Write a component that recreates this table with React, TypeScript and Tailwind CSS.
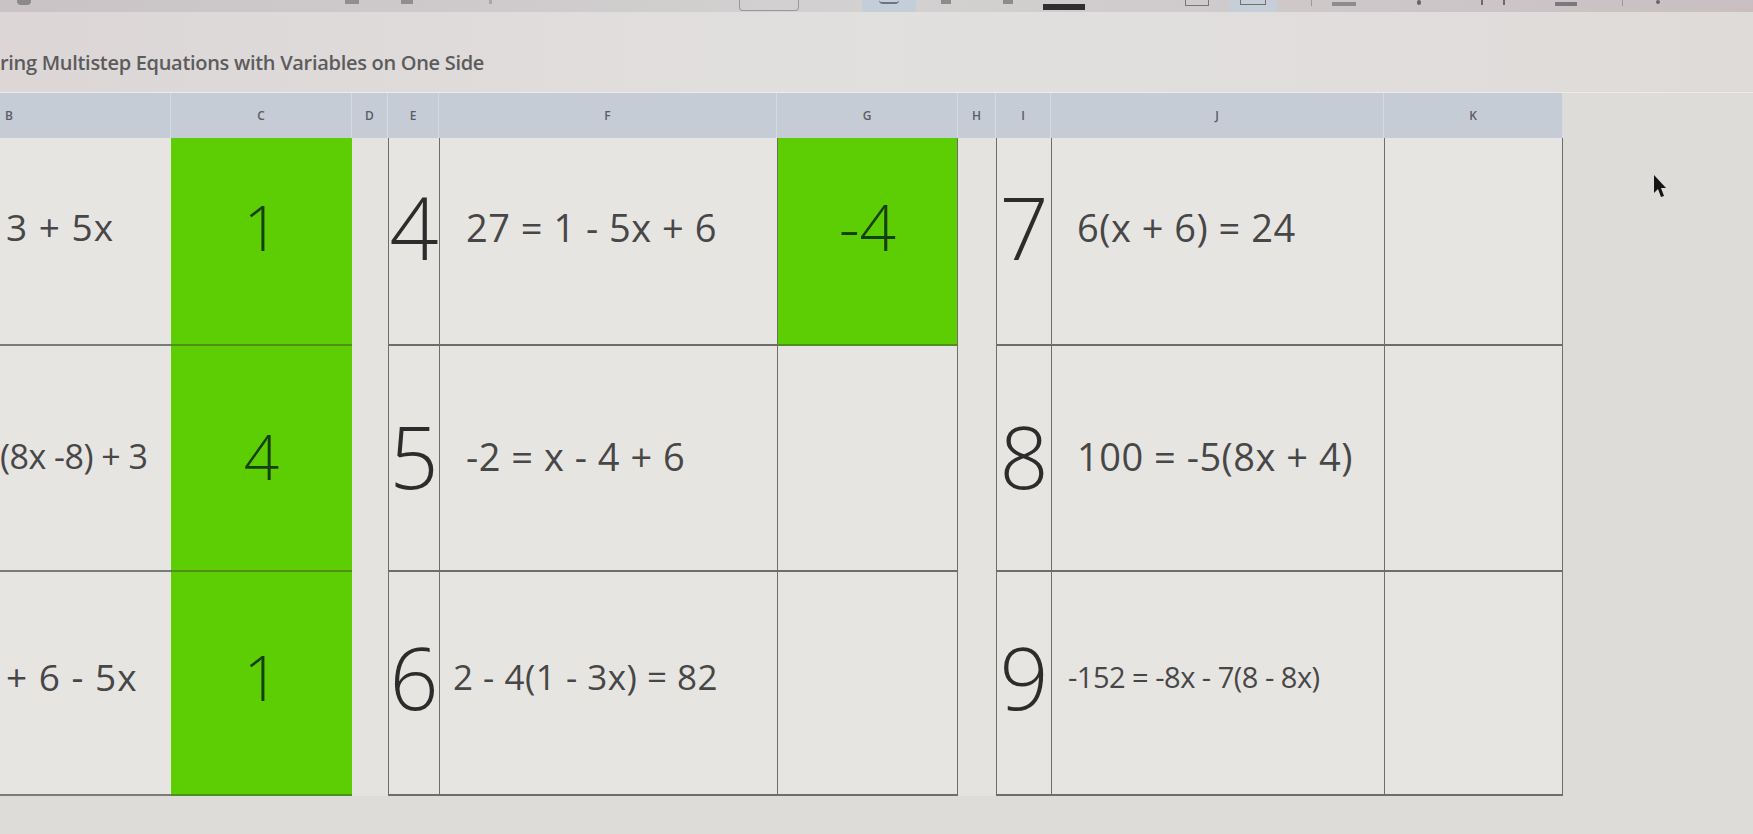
import { ReactNode } from 'react';

type Row = {
  b: string;
  c: string;
  e: string;
  f: string;
  g: string;
  i: string;
  j: string;
  greenG: boolean;
};

const ROWS: Row[] = [
  { b: '3 + 5x', c: '1', e: '4', f: '27 = 1 - 5x + 6', g: '-4', i: '7', j: '6(x + 6) = 24', greenG: true },
  { b: '(8x -8) + 3', c: '4', e: '5', f: '-2 = x - 4 + 6', g: '', i: '8', j: '100 = -5(8x + 4)', greenG: false },
  { b: '+ 6 - 5x', c: '1', e: '6', f: '2 - 4(1 - 3x) = 82', g: '', i: '9', j: '-152 = -8x - 7(8 - 8x)', greenG: false },
];

const HEADERS = ['B', 'C', 'D', 'E', 'F', 'G', 'H', 'I', 'J', 'K', ''];

const ROW_PAD = ['pb-7', 'pb-1', 'pb-3'];
const B_TEXT = [
  'pl-[6px] text-[37px] tracking-[1px]',
  'pl-0 text-[34px] tracking-[-0.5px]',
  'pl-[6px] text-[37px] tracking-[1px]',
];

function ToolbarStrip() {
  // only the bottom edge of the toolbar shows in the photo
  return (
    <div className="flex h-[12px] items-start bg-gradient-to-r from-[#c9c3c5] via-[#d3d1d1] to-[#c9bfc2]">
      <span className="ml-[17px] h-[5px] w-[14px] rounded-b-sm bg-[#8a8a8a]" />
      <span className="ml-[314px] h-[4px] w-[14px] bg-[#8f8f8f]" />
      <span className="ml-[42px] h-[4px] w-[12px] bg-[#8f8f8f]" />
      <span className="ml-[76px] h-[4px] w-[3px] bg-[#a8a8a8]" />
      <span className="ml-[247px] h-[11px] w-[60px] rounded-b-[4px] border border-t-0 border-[#9a9a9a]" />
      <span className="ml-[63px] flex h-[12px] w-[54px] items-start justify-center bg-[#c3ced9]">
        <span className="h-[4px] w-[20px] rounded-b-sm border-b-2 border-[#6d7380]" />
      </span>
      <span className="ml-[25px] h-[4px] w-[10px] bg-[#8c8c8c]" />
      <span className="ml-[52px] h-[4px] w-[10px] bg-[#8c8c8c]" />
      <span className="ml-[30px] mt-[4px] h-[6px] w-[42px] bg-[#2f2f2f]" />
      <span className="ml-[100px] h-[6px] w-[24px] border-b border-x border-[#777]" />
      <span className="ml-[20px] flex h-[12px] w-[48px] items-start justify-center bg-[#c6cfd9]">
        <span className="h-[5px] w-[26px] border-b border-x border-[#6f6f6f]" />
      </span>
      <span className="ml-[34px] h-[6px] w-px bg-[#999]" />
      <span className="ml-[20px] mt-[2px] h-[4px] w-[24px] bg-[#8c8c8c]" />
      <span className="ml-[61px] h-[5px] w-[4px] rounded-full bg-[#666]" />
      <span className="ml-[60px] h-[5px] w-[24px] border-x-2 border-[#6b6b6b]" />
      <span className="ml-[50px] mt-[2px] h-[4px] w-[22px] bg-[#7a7a7a]" />
      <span className="ml-[45px] h-[6px] w-px bg-[#999]" />
      <span className="ml-[33px] h-[4px] w-[4px] rounded-full bg-[#666]" />
    </div>
  );
}

function Cell({ className, children }: { className?: string; children?: ReactNode }) {
  return <div className={`flex overflow-hidden ${className ?? ''}`}>{children}</div>;
}

export default function App() {
  return (
    <div className="flex h-[834px] w-[1753px] flex-col overflow-hidden bg-[#dddcd8] font-['Open_Sans',sans-serif]">
      <ToolbarStrip />

      <div className="flex h-[80px] items-start bg-gradient-to-r from-[#dcd6d7] via-[#e2e0df] to-[#dedbd9] pt-[37px]">
        <h1 className="whitespace-nowrap text-[20px] font-semibold leading-[27px] tracking-[-0.3px] text-[#5c5c5c]">
          ring Multistep Equations with Variables on One Side
        </h1>
      </div>

      <div className="grid h-[46px] grid-cols-[171px_181px_36px_51px_338px_181px_38px_55px_333px_179px_1fr] border-t border-[#eceaea] bg-[#c5ccd6] text-[12px] font-semibold text-[#5a5d63]">
        {HEADERS.map((h, idx) => (
          <div
            key={idx}
            className={
              idx === 0
                ? 'flex items-center pl-[5px] border-r border-[#d4dae2]'
                : idx === 10
                  ? 'bg-[#dddcd8]'
                  : 'flex items-center justify-center border-r border-[#d4dae2]'
            }
          >
            {h}
          </div>
        ))}
      </div>

      <div className="grid grid-cols-[171px_181px_36px_51px_338px_181px_38px_55px_333px_179px_1fr] grid-rows-[208px_226px_224px] bg-[#e7e5e2] text-[#474747]">
        {ROWS.map((r, ri) => (
          <div key={ri} className="contents">
            <Cell className={`items-center whitespace-nowrap border-b-2 border-[#7d7b7a] ${ROW_PAD[ri]} ${B_TEXT[ri]}`}>
              {r.b}
            </Cell>
            <Cell className={`items-center justify-center border-b-2 border-[#4f8f1c] bg-[#5dcd04] text-[62px] font-light text-[#14400c] ${ROW_PAD[ri]}`}>
              {r.c}
            </Cell>
            <Cell className="bg-[#e4e3e0]" />
            <Cell className={`items-center justify-center border-b-2 border-l border-[#6e6d6c] text-[86px] font-light leading-none text-[#2c2c2c] ${ROW_PAD[ri]}`}>
              {r.e}
            </Cell>
            <Cell
              className={`items-center whitespace-nowrap border-b-2 border-l border-[#6e6d6c] ${ri === 2 ? 'pl-[13px] text-[35px]' : 'pl-[26px] text-[38px]'} ${ROW_PAD[ri]}`}
            >
              <span className="tracking-[0.5px]">{r.f}</span>
            </Cell>
            <Cell
              className={`items-center justify-center border-b-2 border-x border-[#6e6d6c] text-[64px] font-light text-[#14400c] ${r.greenG ? 'bg-[#5dcd04] border-b-[#4f8f1c]' : ''} ${ROW_PAD[ri]}`}
            >
              {r.g}
            </Cell>
            <Cell className="bg-[#e4e3e0]" />
            <Cell className={`items-center justify-center border-b-2 border-l border-[#6e6d6c] text-[86px] font-light leading-none text-[#2c2c2c] ${ROW_PAD[ri]}`}>
              {r.i}
            </Cell>
            <Cell
              className={`items-center whitespace-nowrap border-b-2 border-l border-[#6e6d6c] ${ri === 2 ? 'pl-[16px] text-[29px] tracking-[-0.5px]' : 'pl-[25px] text-[38px] tracking-[0.5px]'} ${ROW_PAD[ri]}`}
            >
              {r.j}
            </Cell>
            <Cell className="border-b-2 border-x border-[#6e6d6c]" />
            <Cell className="bg-[#dddcd8] items-start justify-start">
              {ri === 0 && (
                <svg width="16" height="26" viewBox="0 0 16 26" className="ml-[89px] mt-[36px]">
                  <path d="M2 1 L2 19 L6 15 L9 23 L12 22 L9 14 L14 14 Z" fill="#151515" />
                </svg>
              )}
            </Cell>
          </div>
        ))}
      </div>
    </div>
  );
}
